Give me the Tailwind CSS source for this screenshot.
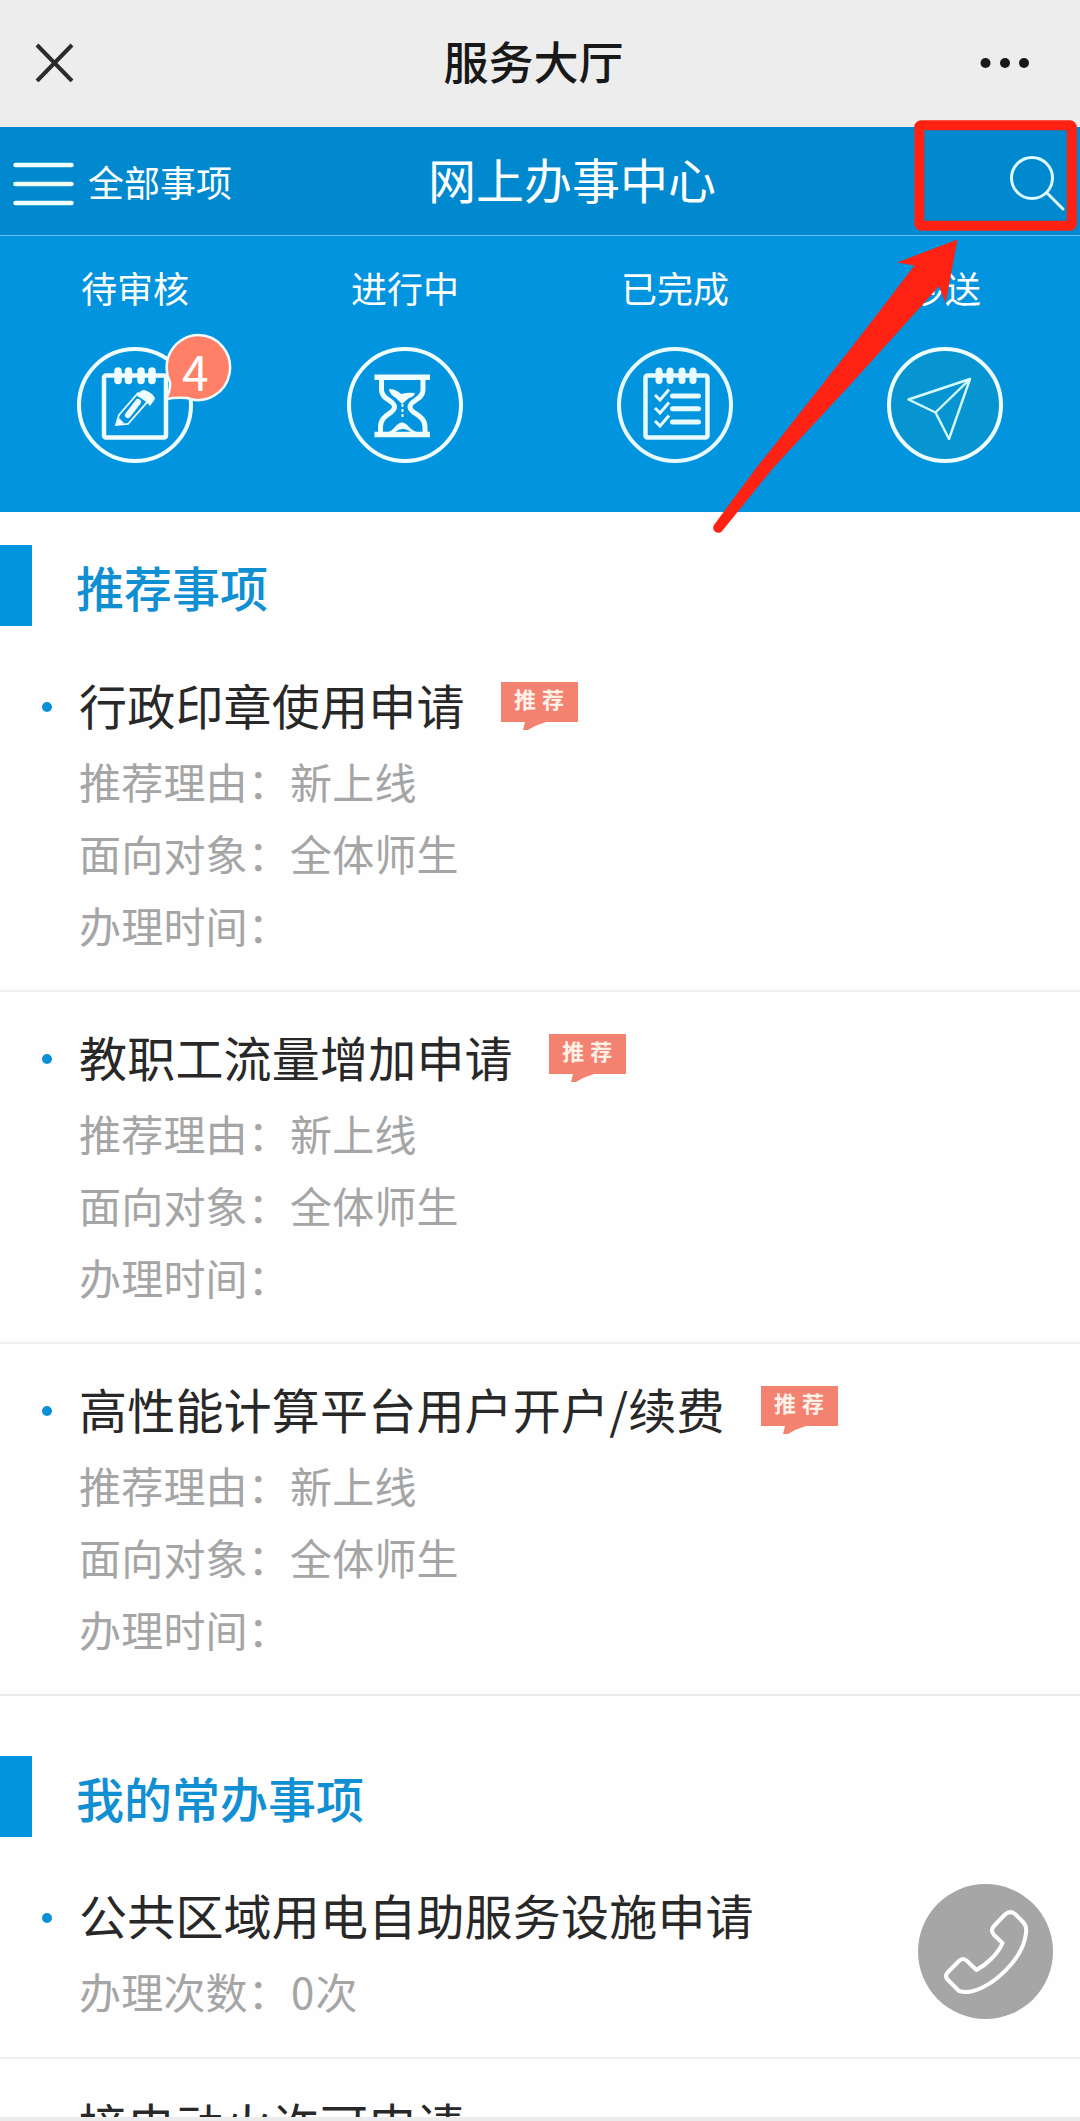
<!DOCTYPE html>
<html lang="zh-CN">
<head>
    <meta charset="UTF-8">
    <meta name="viewport" content="width=device-width, initial-scale=1.0">
    <title>服务大厅</title>
    <script src="https://cdn.jsdelivr.net/npm/@tailwindcss/browser@4"></script>
</head>
<body class="bg-[#ececec] font-['Noto_Sans_CJK_SC',sans-serif]">
<div class="relative w-[1080px] h-[2121px] overflow-hidden">
    <div class="h-[2117px] overflow-hidden bg-[#fefefe]">
        <!-- 标题栏 -->
        <div class="h-[127px] bg-[#ededed] grid grid-cols-[200px_1fr_200px] items-center">
            <svg class="w-10 h-10 ml-[34px] -mt-[3px]" viewBox="0 0 40 40" fill="none" stroke="#2b2b2b" stroke-width="4"><path d="M3 3l35 36M38 3L3 39"/></svg>
            <h1 class="text-[45px] leading-none font-medium text-[#181818] text-center -ml-[13px] -mt-[7px]">服务大厅</h1>
            <svg class="w-[50px] h-3 ml-[100px] -mt-[2px]" viewBox="0 0 50 12" fill="#181818"><circle cx="5.5" cy="6" r="5"/><circle cx="25" cy="6" r="5"/><circle cx="44" cy="6" r="5"/></svg>
        </div>

        <!-- 导航 -->
        <nav class="h-[109px] bg-[#0089cf] border-b border-[#62bff0] text-white flex items-center justify-between">
            <div class="w-[428px] flex items-center pl-[13px] pt-[6px]">
                <svg class="w-[61px] h-[44px]" viewBox="0 0 61 44" stroke="#f0ffff" stroke-width="4.5" stroke-linecap="round"><path d="M2.5 3h56M2.5 22h56M2.5 41h56"/></svg>
                <span class="text-[36px] leading-none ml-[14px] -mt-[6px]">全部事项</span>
            </div>
            <h2 class="text-[48px] leading-none -mt-[7px]">网上办事中心</h2>
            <div class="flex-1 flex justify-end pr-[14px]">
                <svg class="w-[56px] h-[56px] mt-[6px]" viewBox="0 0 56 56" fill="none" stroke="#dcfaff" stroke-width="3" stroke-linecap="round"><circle cx="22" cy="22" r="20.5"/><path d="M37 37l16 16"/></svg>
            </div>
        </nav>

        <!-- 状态统计 -->
        <div class="h-[276px] bg-[#0294de] text-white grid grid-cols-4 pt-[33px]">
            <div class="flex flex-col items-center">
                <span class="text-[36px] leading-[36px]">待审核</span>
                <div class="relative mt-[42px]">
                    <svg class="w-[116px] h-[116px]" viewBox="0 0 116 116" fill="none" stroke="#effdff">
                        <circle cx="58" cy="58" r="56" stroke-width="4"/>
                        <rect x="27" y="28.5" width="62" height="62" rx="2" stroke-width="4.5"/>
                        <path d="M41 24v9.500M51.500 24v9.500M64 24v9.500M75 24v9.500" stroke-width="7.500" stroke-linecap="round"/>
                        <path d="M61 46L42 68l-3 10 12-1 20-23z" stroke-width="1.800"/>
                        <path d="M61 55L51 68" stroke-width="6" stroke-linecap="round"/>
                        <path d="M62 46q3-5 8-2 7 3 8 8l-5 7q-5-6-13-10z" fill="#effdff" stroke="none"/>
                        <path d="M39 79l3-8 5 5z" fill="#effdff" stroke="none"/>
                    </svg>
                    <svg class="absolute left-[86px] -top-[14px] w-[70px] h-[70px]" viewBox="0 0 70 70"><path d="M35 2a32 32.500 0 1 1-11 63q-10-1-21 1 5-10 4-17A32 32.500 0 0 1 35 2z" fill="#ff8066" stroke="#eefaff" stroke-width="2.500"/></svg>
                    <span class="absolute left-[105px] -top-[1px] text-[48px] leading-[48px]">4</span>
                </div>
            </div>
            <div class="flex flex-col items-center">
                <span class="text-[36px] leading-[36px]">进行中</span>
                <svg class="w-[116px] h-[116px] mt-[42px]" viewBox="0 0 116 116" fill="none" stroke="#effdff">
                    <circle cx="58" cy="58" r="56" stroke-width="4"/>
                    <path d="M27.500 30.200h55.500M27.500 87.500h55.500" stroke-width="5.500"/>
                    <path d="M34.500 32v11c0 10 13 10 13 17s-14 7-14 20v7M76 32v11c0 10-13 10-13 17s15 7 15 20v7" stroke-width="5"/>
                    <path d="M42 42q7 0 12 5 7-2 14-1-1 4-6 5l-7 6-6-6q-7-4-7-9zM38 86q6-1 10-6 7-9 14 0 5 5 11 6l-8 0q-9-8-18 0z" fill="#effdff" stroke="none"/>
                    <path d="M55.500 57v14" stroke-width="2" stroke-dasharray="3 2"/>
                </svg>
            </div>
            <div class="flex flex-col items-center">
                <span class="text-[36px] leading-[36px]">已完成</span>
                <svg class="w-[116px] h-[116px] mt-[42px]" viewBox="0 0 116 116" fill="none" stroke="#e6faff">
                    <circle cx="58" cy="58" r="56" stroke-width="4"/>
                    <rect x="28.500" y="28.500" width="62" height="62" rx="2" stroke-width="4.500"/>
                    <path d="M42 24v9.500M53 24v9.500M65 24v9.500M76 24v9.500" stroke-width="7" stroke-linecap="round"/>
                    <path d="M55.500 49h26M55.500 61.700h26M55.500 75h26" stroke-width="5" stroke-linecap="round"/>
                    <path d="M38 48l5 5 9-10.500M38 61l5 5 9-10.500M38 74l5 5 9-10.500" stroke-width="3"/>
                </svg>
            </div>
            <div class="flex flex-col items-center">
                <span class="text-[36px] leading-[36px]">抄送</span>
                <svg class="w-[116px] h-[116px] mt-[42px]" viewBox="0 0 116 116" fill="none" stroke="#d5fbff" stroke-linejoin="round">
                    <circle cx="58" cy="58" r="56" stroke="#effdff" fill="#0795d2" stroke-width="4"/>
                    <path d="M83 32L21.500 52.500 48.500 65.500 62 92zM48.500 65.500L83 32" stroke-width="2.400"/>
                </svg>
            </div>
        </div>

        <!-- 推荐事项 -->
        <div class="flex items-center mt-[33px] mb-[14px] h-[81px]">
            <div class="w-8 h-full bg-[#0294de]"></div>
            <h3 class="ml-[44px] text-[48px] leading-none font-medium text-[#108fd3]">推荐事项</h3>
        </div>
        <ul>
            <li class="h-[352px] border-b-2 border-[#f0f0f0] pl-[79px] pt-[40px]">
                <div class="relative flex items-center h-12 text-[48px] leading-[48px] tracking-[0.2px] text-[#282828]">
                    <i class="absolute -left-[37px] top-[22px] w-[10px] h-[10px] rounded-full bg-[#0a90d8]"></i>
                    行政印章使用申请
                    <span class="relative ml-[36px] -mt-[4px] w-[77px] h-[40px] bg-[#f48270] pt-[5px] text-center text-[22px] leading-[22px] font-bold tracking-[6px] indent-[6px] text-[#fff0e8]">推荐<svg class="absolute left-[22px] top-[40px] w-6 h-2" viewBox="0 0 24 8" fill="#f48270"><path d="M2 0h21L12 4 5 8H0z"/></svg></span>
                </div>
                <div class="mt-[17px] text-[42px] leading-[72px] tracking-[0.2px] text-[#a5a5a5]">
                    <p>推荐理由：新上线</p>
                    <p>面向对象：全体师生</p>
                    <p>办理时间：</p>
                </div>
            </li>
            <li class="h-[352px] border-b-2 border-[#f0f0f0] pl-[79px] pt-[40px]">
                <div class="relative flex items-center h-12 text-[48px] leading-[48px] tracking-[0.2px] text-[#282828]">
                    <i class="absolute -left-[37px] top-[22px] w-[10px] h-[10px] rounded-full bg-[#0a90d8]"></i>
                    教职工流量增加申请
                    <span class="relative ml-[36px] -mt-[4px] w-[77px] h-[40px] bg-[#f48270] pt-[5px] text-center text-[22px] leading-[22px] font-bold tracking-[6px] indent-[6px] text-[#fff0e8]">推荐<svg class="absolute left-[22px] top-[40px] w-6 h-2" viewBox="0 0 24 8" fill="#f48270"><path d="M2 0h21L12 4 5 8H0z"/></svg></span>
                </div>
                <div class="mt-[17px] text-[42px] leading-[72px] tracking-[0.2px] text-[#a5a5a5]">
                    <p>推荐理由：新上线</p>
                    <p>面向对象：全体师生</p>
                    <p>办理时间：</p>
                </div>
            </li>
            <li class="h-[352px] border-b-2 border-[#eaeaea] pl-[79px] pt-[40px]">
                <div class="relative flex items-center h-12 text-[48px] leading-[48px] tracking-[0.2px] text-[#282828]">
                    <i class="absolute -left-[37px] top-[22px] w-[10px] h-[10px] rounded-full bg-[#0a90d8]"></i>
                    <span>高性能计算平台用户开户/续费</span>
                    <span class="relative ml-[36px] -mt-[4px] w-[77px] h-[40px] bg-[#f48270] pt-[5px] text-center text-[22px] leading-[22px] font-bold tracking-[6px] indent-[6px] text-[#fff0e8]">推荐<svg class="absolute left-[22px] top-[40px] w-6 h-2" viewBox="0 0 24 8" fill="#f48270"><path d="M2 0h21L12 4 5 8H0z"/></svg></span>
                </div>
                <div class="mt-[17px] text-[42px] leading-[72px] tracking-[0.2px] text-[#a5a5a5]">
                    <p>推荐理由：新上线</p>
                    <p>面向对象：全体师生</p>
                    <p>办理时间：</p>
                </div>
            </li>
        </ul>

        <!-- 我的常办事项 -->
        <div class="flex items-center mt-[60px] mb-[14px] h-[81px]">
            <div class="w-8 h-full bg-[#0294de]"></div>
            <h3 class="ml-[44px] text-[48px] leading-none font-medium text-[#108fd3]">我的常办事项</h3>
        </div>
        <ul>
            <li class="h-[208px] border-b-2 border-[#f0f0f0] pl-[79px] pt-[39px]">
                <div class="relative h-12 text-[48px] leading-[48px] tracking-[0.2px] text-[#282828]">
                    <i class="absolute -left-[37px] top-[23px] w-[10px] h-[10px] rounded-full bg-[#0a90d8]"></i>
                    公共区域用电自助服务设施申请
                </div>
                <p class="mt-[17px] text-[42px] leading-[72px] tracking-[0.2px] text-[#a5a5a5]">办理次数：<span class="px-px">0</span>次</p>
            </li>
            <li class="pl-[79px] pt-[40px] text-[48px] leading-[48px] tracking-[0.2px] text-[#282828]">接电动火许可申请</li>
        </ul>
    </div>

    <!-- 电话悬浮按钮 -->
    <svg class="absolute left-[918px] top-[1884px] w-[135px] h-[135px]" viewBox="0 0 135 135">
        <circle cx="67.500" cy="67.500" r="67.500" fill="#a6a6a6"/>
        <path d="M87 30.500Q92 26 97 30L105 38Q109 42 108 49C107 60 101 71 93.500 80C83 92 70 103 55 107Q48 109 41 107L30 96Q26 92 30 88L41 77Q45 73 49 77L58.500 86C68 81 80 70 84.500 59L76 51Q72 46 76 42Z" fill="none" stroke="#fff" stroke-width="4" stroke-linejoin="round"/>
    </svg>

    <!-- 搜索入口标注 -->
    <svg class="absolute inset-0 w-[1080px] h-[540px] pointer-events-none" viewBox="0 0 1080 540">
        <rect x="919.300" y="125.300" width="152.500" height="100.500" rx="2" fill="none" stroke="#ff2112" stroke-width="10"/>
        <path d="M957.500 239.500L897 262.500 914.500 265.500 855 343 781 437 757 467 714 525A5 5 0 0 0 722.500 530.500L774 467 850 385 920.500 307 939 286 945.600 303Z" fill="#ff2112"/>
    </svg>
</div>
</body>
</html>
